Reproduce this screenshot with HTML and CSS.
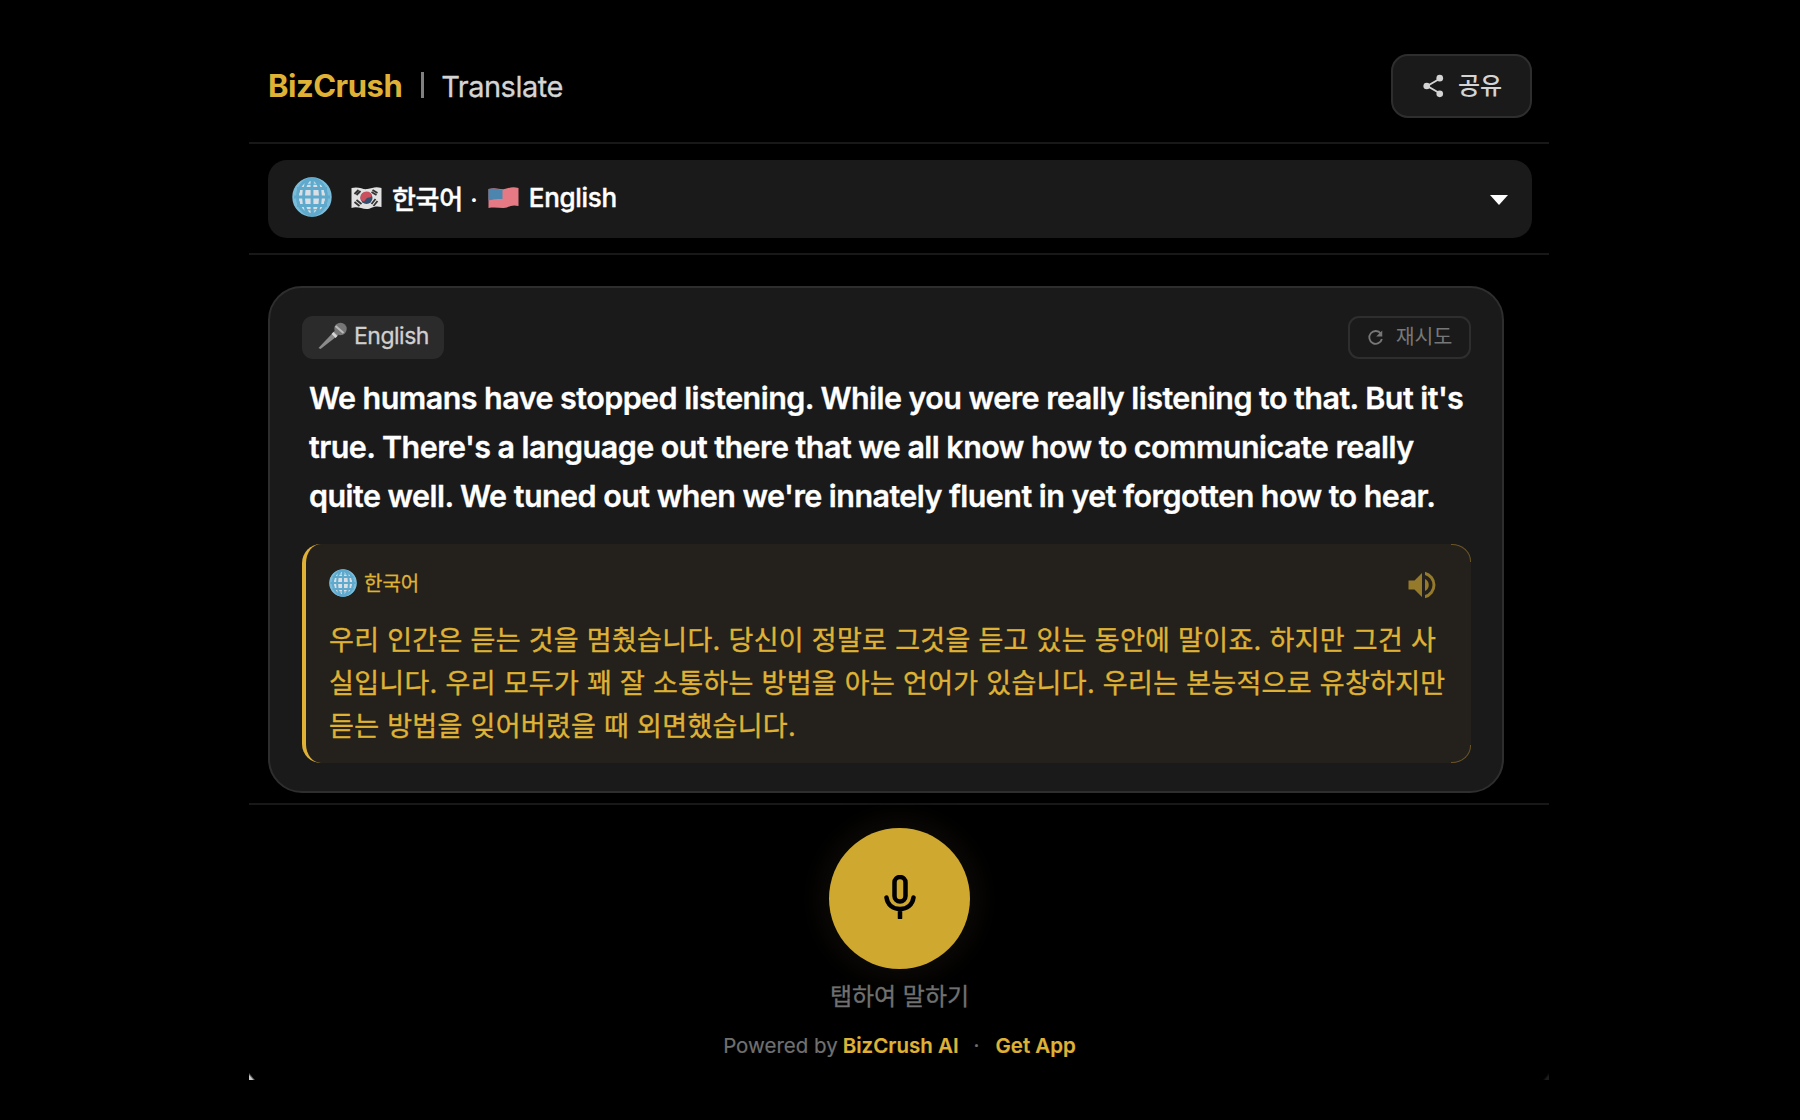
FILE: index.html
```
<!DOCTYPE html>
<html lang="ko">
<head>
    <meta charset="UTF-8">
    <meta name="viewport" content="width=device-width, initial-scale=1.0">
    <title>BizCrush | Translate</title>
    <link rel="stylesheet" href="styles.css">
</head>
<body>

    <svg class="sprites" aria-hidden="true">
        <symbol id="globe" viewBox="0 0 40 40">
            <circle cx="20" cy="20" r="19" fill="#6fb7d8"/>
            <path d="M8 8h24v24H8z" fill="#d9dfe4"/>
            <path d="M4 13c4-6 9-8 16-8s12 2 16 8M4 27c4 6 9 8 16 8s12-2 16-8" stroke="#d9dfe4" stroke-width="3" fill="none" stroke-dasharray="4 3"/>
            <path d="M5 20h30" stroke="#d9dfe4" stroke-width="9" fill="none"/>
            <g fill="none" stroke="#5fa9cd" stroke-width="2.8">
                <circle cx="20" cy="20" r="18" stroke="#79bddb" stroke-width="3.4"/>
                <path d="M20 2v36M2 20h36M5 11.5h30M5 28.5h30"/>
                <ellipse cx="20" cy="20" rx="8.5" ry="18"/>
                <ellipse cx="20" cy="20" rx="14.5" ry="18"/>
            </g>
        </symbol>
    </svg>

    <div class="app">
        <header class="header">
            <div class="brand">
                <span class="brand-name">BizCrush</span>
                <span class="brand-divider"></span>
                <span class="brand-page">Translate</span>
            </div>
            <button class="share-button">
                <svg class="share-icon" viewBox="0 0 24 24"><path d="M18 5 6 12l12 7" fill="none" stroke="currentColor" stroke-width="1.8"/><circle cx="18" cy="4.5" r="3.2"/><circle cx="5.5" cy="12" r="3.2"/><circle cx="18" cy="19.5" r="3.2"/></svg>
                <span>공유</span>
            </button>
        </header>

        <div class="language-bar">
            <button class="language-select">
                <svg class="globe-large"><use href="#globe"/></svg>
                <svg class="flag" viewBox="0 0 32 24">
                    <path d="M1 2c8-2 11 2 16 1s8-3 14-1v19c-8-2-10 2-15 2S7 20 1 22z" fill="#e2e2e2"/>
                    <circle cx="16" cy="12" r="6" fill="#35506f"/>
                    <path d="M10.4 14A6 6 0 0 1 21.5 9c-1 4-4 1-6 4s-2 3-5.1 1z" fill="#c9505c"/>
                    <path d="M4 8l4-4M6 9l4-4M22 4l5 3M21 6l5 3M4 16l5 4M6 14l5 4M23 20l4-5M21 18l4-5" stroke="#333" stroke-width="1.8"/>
                </svg>
                <span class="language-name">한국어</span>
                <span class="language-dot">·</span>
                <svg class="flag" viewBox="0 0 32 24">
                    <path d="M1 3c8-2 11 1 16 0s8-3 14-1v18c-8-2-10 2-15 2S7 21 1 22z" fill="#e57a84"/>
                    <path d="M1 3c6-1.5 10 .5 14 .5V13c-5 0-8 0-14 1.5z" fill="#4c86ae"/>
                </svg>
                <span class="language-name">English</span>
                <span class="caret"></span>
            </button>
        </div>

        <main class="conversation">
            <article class="message">
                <div class="message-top">
                    <span class="source-chip">
                        <svg class="chip-mic" viewBox="0 0 30 28"><path d="M17 9l4 4L3 27l-2-1z" fill="#8b8b8b"/><path d="M15 11l4 4" stroke="#d8d8d8" stroke-width="2.5"/><circle cx="23" cy="7" r="6.2" fill="#777"/><path d="M18 4l8 7" stroke="#bbb" stroke-width="2"/></svg>
                        <span>English</span>
                    </span>
                    <button class="retry-button">
                        <svg class="retry-icon" viewBox="0 0 24 24"><path d="M19.5 6.5A9 9 0 1 0 21 14" fill="none" stroke="currentColor" stroke-width="2.6"/><path d="M21.5 2v8.5H13z" fill="currentColor"/></svg>
                        <span>재시도</span>
                    </button>
                </div>
                <p class="source-text">We humans have stopped listening. While you were really listening to that. But it's<br>true. There's a language out there that we all know how to communicate really<br>quite well. We tuned out when we're innately fluent in yet forgotten how to hear.</p>
                <section class="translation">
                    <div class="translation-top">
                        <span class="target-label">
                            <svg class="globe-small"><use href="#globe"/></svg>
                            <span>한국어</span>
                        </span>
                        <svg class="speaker-icon" viewBox="0 0 24 24"><path d="M3 9v6h4l5 5V4L7 9zm13.5 3A4.5 4.5 0 0 0 14 7.97v8.05A4.5 4.5 0 0 0 16.5 12zM14 3.23v2.06a7 7 0 0 1 0 13.42v2.06a9 9 0 0 0 0-17.54z"/></svg>
                    </div>
                    <p class="target-text">우리 인간은 듣는 것을 멈췄습니다. 당신이 정말로 그것을 듣고 있는 동안에 말이죠. 하지만 그건 사<br>실입니다. 우리 모두가 꽤 잘 소통하는 방법을 아는 언어가 있습니다. 우리는 본능적으로 유창하지만<br>듣는 방법을 잊어버렸을 때 외면했습니다.</p>
                </section>
            </article>
        </main>

        <footer class="footer">
            <button class="mic-button">
                <svg class="mic-icon" viewBox="0 0 32 44"><rect x="10.5" y="2" width="11" height="24.5" rx="5.5"/><path d="M2.5 22.5c1 7.5 6.5 11.5 13.5 11.5s12.5-4 13.5-11.5M16 34v9"/></svg>
            </button>
            <p class="mic-hint">탭하여 말하기</p>
            <p class="powered">
                <span>Powered by</span>
                <a class="powered-brand" href="#">BizCrush AI</a>
                <span class="powered-dot">·</span>
                <a class="powered-app" href="#">Get App</a>
            </p>
        </footer>
    </div>

</body>
</html>
```
FILE: styles.css
```
* {
    box-sizing: border-box;
}

body {
    margin: 0;
    background-color: #000;
    color: #fff;
    font-family: Inter, "Noto Sans CJK KR", sans-serif;
}

button {
    font-family: inherit;
    color: inherit;
    cursor: pointer;
}

p {
    margin: 0;
}

.sprites {
    display: none;
}

.app {
    position: relative;
    width: 1300px;
    height: 1080px;
    margin-left: 249px;
    overflow: hidden;
}

/* small light corners left by the rounded window */
.app::before,
.app::after {
    content: "";
    position: absolute;
    bottom: 0;
    width: 6px;
    height: 7px;
}

.app::before {
    left: 0;
    background: linear-gradient(to top right, #ccc 30%, transparent 55%);
}

.app::after {
    right: 0;
    background: linear-gradient(to top left, #1c1c1c 30%, transparent 55%);
}

.header {
    display: flex;
    justify-content: space-between;
    height: 144px;
    padding: 54px 17px 0 19px;
    border-bottom: 2px solid #181818;
}

.brand {
    display: flex;
    align-items: center;
    height: 64px;
}

.brand-name {
    padding-bottom: 2px;
    color: #dfb236;
    font-size: 31px;
    font-weight: 700;
    letter-spacing: -0.5px;
}

.brand-divider {
    width: 3px;
    height: 26px;
    margin: 0 17px 2px 19px;
    background-color: #808080;
}

.brand-page {
    color: #d4d4d4;
    font-size: 29px;
    letter-spacing: -0.5px;
    -webkit-text-stroke: 0.3px #d4d4d4;
}

.share-button {
    display: flex;
    align-items: center;
    justify-content: center;
    gap: 12px;
    width: 141px;
    height: 64px;
    padding: 0;
    background-color: #1a1a1a;
    border: 2px solid #2e2e2e;
    border-radius: 17px;
    color: #d4d4d4;
    font-size: 24px;
    font-weight: 500;
}

.share-button span,
.retry-button span {
    padding-bottom: 5px;
}

.share-icon {
    width: 25px;
    height: 26px;
    fill: currentColor;
}

.language-bar {
    height: 111px;
    padding: 16px 17px 0 19px;
    border-bottom: 2px solid #181818;
}

.language-select {
    display: flex;
    align-items: center;
    width: 100%;
    height: 78px;
    padding: 0 24px;
    background-color: #1a1a1a;
    border: none;
    border-radius: 19px;
    font-size: 26px;
    font-weight: 500;
}

.globe-large {
    width: 40px;
    height: 40px;
    margin: 0 18px 4px 0;
}

.flag {
    width: 33px;
    height: 24px;
    margin: 0 9px 3px 0;
}

.language-name {
    padding-bottom: 3px;
    letter-spacing: -0.3px;
    -webkit-text-stroke: 0.4px #fff;
}

.language-dot {
    margin: 0 9px 0 7px;
}

.caret {
    margin-left: auto;
    margin-top: 2px;
    border: 9px solid transparent;
    border-top: 10px solid #fff;
    border-bottom: none;
}

.conversation {
    padding: 31px 45px 10px 19px;
}

.message {
    height: 507px;
    padding: 28px 31px 0 32px;
    background-color: #1a1a1a;
    border: 2px solid #2e2e2e;
    border-radius: 34px;
}

.message-top {
    display: flex;
    justify-content: space-between;
}

.source-chip,
.retry-button {
    display: flex;
    align-items: center;
    height: 43px;
    border-radius: 11px;
}

.source-chip {
    gap: 6px;
    padding: 0 15px;
    background-color: #2b2b2b;
    color: #d0d0d0;
    font-size: 23px;
    letter-spacing: -0.5px;
    -webkit-text-stroke: 0.3px #d0d0d0;
}

.source-chip span {
    padding-bottom: 3px;
}

.chip-mic {
    width: 31px;
    height: 28px;
    margin-bottom: 4px;
}

.retry-button {
    justify-content: center;
    gap: 12px;
    width: 123px;
    padding: 0;
    background: none;
    border: 2px solid #2e2e2e;
    color: #777;
    font-size: 20.5px;
}

.retry-icon {
    width: 17px;
    height: 17px;
}

.source-text {
    margin: 14px 0 0 7px;
    font-size: 30.5px;
    font-weight: 600;
    letter-spacing: -0.56px;
    line-height: 49px;
    white-space: nowrap;
    -webkit-text-stroke: 0.3px #fff;
}

.translation {
    position: relative;
    height: 219px;
    margin-top: 24px;
    padding: 24px 24px 0 23px;
    background-color: #24201b;
    border: 0 solid #dfb236;
    border-left-width: 4px;
    border-radius: 19px;
    color: #dfb236;
}

/* faint gold arcs on the right corners */
.translation::before,
.translation::after {
    content: "";
    position: absolute;
    right: 0;
    width: 19px;
    height: 17px;
    border: 0 solid #6b5423;
    border-right-width: 1px;
}

.translation::before {
    top: 0;
    border-top-width: 1px;
    border-top-right-radius: 19px 17px;
}

.translation::after {
    bottom: 0;
    border-bottom-width: 1px;
    border-bottom-right-radius: 19px 17px;
}

.translation-top {
    display: flex;
    justify-content: space-between;
    align-items: center;
    height: 33px;
}

.target-label {
    display: flex;
    align-items: center;
    gap: 7px;
    font-size: 20px;
    -webkit-text-stroke: 0.3px #dfb236;
}

.target-label span {
    padding-bottom: 4px;
}

.globe-small {
    width: 28px;
    height: 28px;
    margin-bottom: 3px;
}

.speaker-icon {
    width: 36px;
    height: 36px;
    margin-right: 7px;
    fill: #957a2b;
}

.target-text {
    margin-top: 18px;
    font-size: 27px;
    letter-spacing: 0.3px;
    line-height: 43px;
    white-space: nowrap;
    -webkit-text-stroke: 0.4px #dfb236;
}

.footer {
    display: flex;
    flex-direction: column;
    align-items: center;
    padding: 23px 0 0 1px;
    border-top: 2px solid #181818;
}

.mic-button {
    display: flex;
    align-items: center;
    justify-content: center;
    width: 141px;
    height: 141px;
    padding: 0 0 3px;
    background-color: #cfa830;
    border: none;
    border-radius: 50%;
    box-shadow: 0 0 22px 12px #0b0906;
}

.mic-icon {
    width: 32px;
    height: 44px;
    fill: none;
    stroke: #000;
    stroke-width: 4.5;
    stroke-linecap: round;
}

.mic-hint {
    margin-top: 10px;
    color: #707070;
    font-size: 24px;
    line-height: 36px;
    -webkit-text-stroke: 0.3px #707070;
}

.powered {
    display: flex;
    margin-top: 17px;
    color: #707070;
    font-size: 20.5px;
    line-height: 28px;
    -webkit-text-stroke: 0.2px;
}

.powered a {
    color: #dfb236;
    font-weight: 600;
    text-decoration: none;
}

.powered-brand {
    margin-left: 5px;
}

.powered-dot {
    margin: 0 16px 0 15px;
}
```
